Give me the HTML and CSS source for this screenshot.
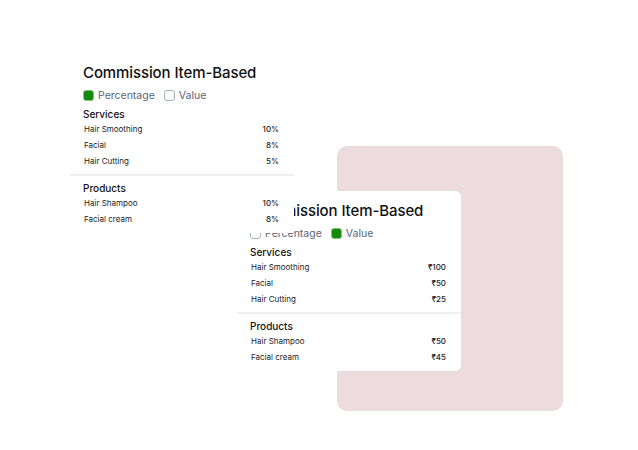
FILE: index.html
```html
<!DOCTYPE html>
<html>
<head>
<meta charset="utf-8">
<link rel="stylesheet" href="styles.css">
</head>
<body>
<div class="stage">
  <div class="panel"></div>
  <div class="card card-value">
    <h2 class="title">Commission Item-Based</h2>
    <div class="toggles">
      <span class="opt"><span class="box"></span>Percentage</span>
      <span class="opt"><span class="box on"></span>Value</span>
    </div>
    <div class="group">
      <div class="head">Services</div>
      <div class="row"><span>Hair Smoothing</span><span>₹100</span></div>
      <div class="row"><span>Facial</span><span>₹50</span></div>
      <div class="row"><span>Hair Cutting</span><span>₹25</span></div>
    </div>
    <div class="divider"></div>
    <div class="group">
      <div class="head">Products</div>
      <div class="row"><span>Hair Shampoo</span><span>₹50</span></div>
      <div class="row"><span>Facial cream</span><span>₹45</span></div>
    </div>
  </div>
  <div class="card card-pct">
    <h2 class="title">Commission Item-Based</h2>
    <div class="toggles">
      <span class="opt"><span class="box on"></span>Percentage</span>
      <span class="opt"><span class="box"></span>Value</span>
    </div>
    <div class="group">
      <div class="head">Services</div>
      <div class="row"><span>Hair Smoothing</span><span>10%</span></div>
      <div class="row"><span>Facial</span><span>8%</span></div>
      <div class="row"><span>Hair Cutting</span><span>5%</span></div>
    </div>
    <div class="divider"></div>
    <div class="group">
      <div class="head">Products</div>
      <div class="row"><span>Hair Shampoo</span><span>10%</span></div>
      <div class="row"><span>Facial cream</span><span>8%</span></div>
    </div>
  </div>
</div>
</body>
</html>
```
FILE: styles.css
```css
* { box-sizing: border-box; }
html, body { margin: 0; padding: 0; background: #fff; }
body { font-family: Inter, "Liberation Sans", "DejaVu Sans", sans-serif; color: #111; width: 638px; height: 450px; overflow: hidden; }
.stage { display: grid; width: 638px; height: 450px; }
.stage > * { grid-area: 1 / 1; align-self: start; justify-self: start; }
.panel { margin: 146px 0 0 337px; width: 226px; height: 265px; background: #ecdcdd; border-radius: 10px; }
.card { width: 224px; height: 180px; background: #fff; padding: 10px 15px 0 13px; }
.card-pct { margin: 53px 0 0 70px; }
.card-value { margin: 191px 0 0 237px; border-radius: 6px; }
.title { margin: 0; font-size: 15px; font-weight: 500; line-height: 20px; letter-spacing: -0.1px; color: #111; }
.toggles { display: flex; gap: 9px; margin-top: 4px; height: 16px; align-items: center; }
.opt { display: flex; align-items: center; gap: 4px; font-size: 10.5px; color: #5b6577; }
.box { width: 11px; height: 11px; border: 1.2px solid #a9b0bd; border-radius: 3px; background: #fff; }
.box.on { background: #138a0c; border: 1.6px solid #7cc571; }
.group { display: flex; flex-direction: column; }
.head { font-size: 10px; font-weight: 500; line-height: 14px; margin-top: 4px; }
.row { display: flex; justify-content: space-between; font-size: 8px; line-height: 16px; color: #222; padding-left: 1px; }
.row span:last-child { font-weight: 500; }
.divider { height: 2px; background: #efefef; margin: 5px -15px 1px -13px; }
```
